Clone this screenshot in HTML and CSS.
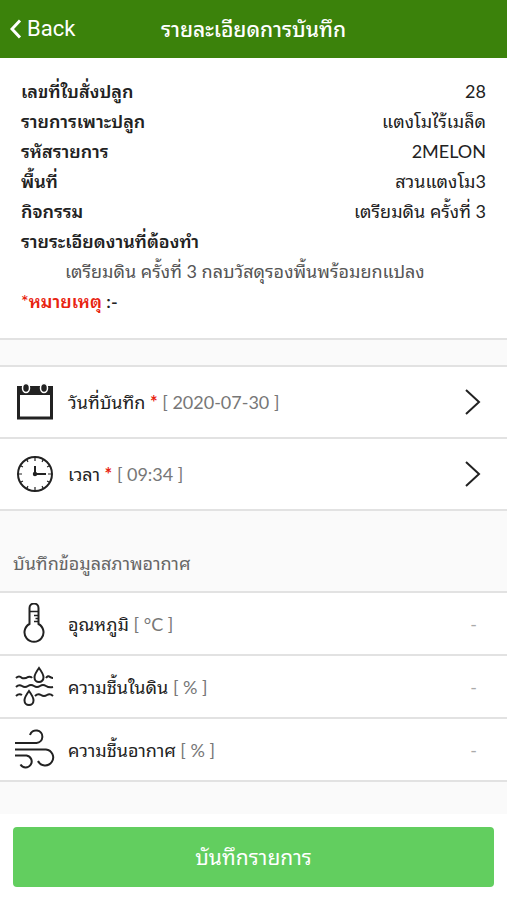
FILE: index.html
```html
<!DOCTYPE html>
<html lang="th">
<head>
<meta charset="utf-8">
<meta name="viewport" content="width=device-width, initial-scale=1">
<title>รายละเอียดการบันทึก</title>
<link rel="stylesheet" href="styles.css">
</head>
<body>
<header class="topbar">
  <a class="back" href="#">
    <svg class="back-icon" viewBox="0 0 12 20" aria-hidden="true"><path d="M10 1.500 2 10l8 8.500"/></svg>
    <span>Back</span>
  </a>
  <h1 class="title">รายละเอียดการบันทึก</h1>
</header>
<main>
  <section class="summary">
    <dl class="facts">
      <div class="fact"><dt>เลขที่ใบสั่งปลูก</dt><dd>28</dd></div>
      <div class="fact"><dt>รายการเพาะปลูก</dt><dd>แตงโมไร้เมล็ด</dd></div>
      <div class="fact"><dt>รหัสรายการ</dt><dd>2MELON</dd></div>
      <div class="fact"><dt>พื้นที่</dt><dd>สวนแตงโม3</dd></div>
      <div class="fact"><dt>กิจกรรม</dt><dd>เตรียมดิน ครั้งที่ 3</dd></div>
    </dl>
    <h2 class="task-title">รายระเอียดงานที่ต้องทำ</h2>
    <p class="task">เตรียมดิน ครั้งที่ 3 กลบวัสดุรองพื้นพร้อมยกแปลง</p>
    <p class="remark"><span class="remark-label">*หมายเหตุ</span> :-</p>
  </section>

  <section class="group">
    <button class="row picker" type="button">
      <svg class="icon" viewBox="0 0 42 42" aria-hidden="true">
        <rect x="4.500" y="8" width="33" height="29" fill="none" stroke="#222" stroke-width="3"/>
        <path fill="#222" d="M3 5h36v9H3z"/>
        <g fill="#222" stroke="#fff" stroke-width="1.500"><ellipse cx="12" cy="7" rx="3.500" ry="4.500"/><ellipse cx="30" cy="7" rx="3.500" ry="4.500"/></g>
      </svg>
      <span class="label">วันที่บันทึก <b class="star">*</b> <span class="hint">[ 2020-07-30 ]</span></span>
      <svg class="chevron" viewBox="0 0 18 28" aria-hidden="true"><path d="m3 2 13 12L3 26"/></svg>
    </button>
    <button class="row picker" type="button">
      <svg class="icon line" viewBox="0 0 42 42" aria-hidden="true">
        <circle cx="21" cy="21" r="17"/>
        <path d="M21 13v8h11"/><circle cx="21" cy="21" r="1.200" fill="#222"/>
        <path stroke-width="1.200" d="M21 4v4M21 34v4M4 21h4M34 21h4M12.500 6.300l1.500 2.600M28 33.100l1.500 2.600M6.300 12.500l2.600 1.500M33.100 28l2.600 1.500M6.300 29.500l2.600-1.500M33.100 14l2.600-1.500M12.500 35.700l1.500-2.600M28 8.900l1.500-2.600"/>
      </svg>
      <span class="label">เวลา <b class="star">*</b> <span class="hint">[ 09:34 ]</span></span>
      <svg class="chevron" viewBox="0 0 18 28" aria-hidden="true"><path d="m3 2 13 12L3 26"/></svg>
    </button>
  </section>

  <h2 class="section-title">บันทึกข้อมูลสภาพอากาศ</h2>
  <section class="group">
    <div class="row reading">
      <svg class="icon line" viewBox="0 0 42 42" aria-hidden="true">
        <path d="M15.500 21V5a4.500 4.500 0 0 1 9 0v16a9.500 9.500 0 1 1-9 0z"/>
        <path stroke-width="1.500" d="M15.500 8.500h9M20 12.500h4M21.500 15.500h3M20 18.500h4"/>
      </svg>
      <label class="label" for="temperature">อุณหภูมิ <span class="hint">[ °C ]</span></label>
      <input class="value" id="temperature" type="text" placeholder="-">
    </div>
    <div class="row reading">
      <svg class="icon line" viewBox="0 0 42 42" aria-hidden="true">
        <path d="M2 12q3-3 6 0q3 1 6-1q3-1 4 1M32 12q2-3 4-1q2 1 3 1M2 21q3-3 6-1t6 0t6 0t6 0t6 0t7 1M2 30q3-3 6-1M21 30q3-3 6-1t6 0t6 1"/>
        <path d="M25 2q-4.500 6-4.500 9.500a4.500 4.500 0 0 0 9 0Q29.500 8 25 2zM15 25q-4.500 6-4.500 9.500a4.500 4.500 0 0 0 9 0Q19.500 31 15 25z"/>
      </svg>
      <label class="label" for="soil">ความชื้นในดิน <span class="hint">[ % ]</span></label>
      <input class="value" id="soil" type="text" placeholder="-">
    </div>
    <div class="row reading">
      <svg class="icon line" viewBox="0 0 42 42" aria-hidden="true">
        <path d="M1 14h21.500a6.300 6.300 0 1 0-6.500-8M1 20.500h31a8 8 0 1 1-8 11.500M1 26.500h11.500a6 6 0 1 1-6 9"/>
      </svg>
      <label class="label" for="air">ความชื้นอากาศ <span class="hint">[ % ]</span></label>
      <input class="value" id="air" type="text" placeholder="-">
    </div>
  </section>
</main>
<footer class="actions">
  <button class="save" type="submit">บันทึกรายการ</button>
</footer>
</body>
</html>
```
FILE: styles.css
```css
* { box-sizing: border-box; }
body {
  margin: 0;
  min-height: 100vh;
  display: flex;
  flex-direction: column;
  background: #fafafa;
  color: #222;
  font: 18px/30px Lato, "Noto Sans Thai Looped", Loma, Garuda, "Noto Sans Thai", sans-serif;
}
main { flex: 1; }
h1, h2, p, dl, dd { margin: 0; }
button, input { font: inherit; color: inherit; }

.topbar {
  display: grid;
  grid-template-columns: 1fr auto 1fr;
  align-items: center;
  height: 58px;
  padding: 0 10px;
  background: #3b820b;
  color: #fff;
}
.back {
  display: flex;
  align-items: center;
  gap: 5px;
  color: inherit;
  text-decoration: none;
  font-family: Roboto, sans-serif;
  font-size: 22px;
}
.back-icon { width: 12px; height: 20px; fill: none; stroke: #fff; stroke-width: 3; }
.title { font-size: 21px; font-weight: 500; }

.summary {
  padding: 18px 21px 22px;
  background: #fff;
  border-bottom: 2px solid #e2e2e2;
}
.fact { display: flex; justify-content: space-between; }
.fact dt, .task-title, .remark { font-size: 18px; font-weight: 600; }
.task { padding-left: 44px; color: #555; }
.remark-label { color: #e8230f; }

.group { border-top: 2px solid #e2e2e2; background: #fff; }
.summary + .group { margin-top: 25px; }
.row {
  display: flex;
  align-items: center;
  gap: 12px;
  width: 100%;
  padding: 0 14px;
  border: 0;
  border-bottom: 2px solid #e2e2e2;
  background: #fff;
  text-align: left;
}
.picker { height: 72px; }
.reading { height: 63px; }
.icon { flex: none; width: 42px; height: 42px; }
.line, .chevron { fill: none; stroke: #222; stroke-width: 2; }
.label { flex: 1; white-space: nowrap; }
.hint { color: #777; }
.star { color: #e8230f; }
.chevron { width: 18px; height: 28px; margin-right: 12px; }
.value {
  width: 80px;
  padding: 0;
  border: 0;
  margin-right: 16px;
  background: none;
  text-align: right;
}
.value::placeholder { color: #aaa; opacity: 1; }
.section-title {
  padding: 37px 13px 13px;
  color: #666;
  font-size: 18px;
  font-weight: 400;
}
.actions { padding: 13px; background: #fff; }
.save {
  width: 100%;
  height: 60px;
  border: 0;
  border-radius: 4px;
  background: #62ce5f;
  color: #fff;
  font-size: 21px;
}
```
